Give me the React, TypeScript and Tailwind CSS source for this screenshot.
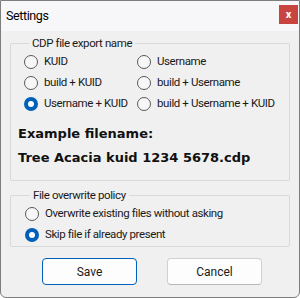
import { useState } from 'react'

function Radio({ checked, label, onClick }: { checked: boolean; label: string; onClick: () => void }) {
  return (
    <button type="button" onClick={onClick} className="flex h-[21px] items-center gap-[6px] text-left whitespace-nowrap">
      {checked ? (
        <span className="flex h-[14px] w-[14px] shrink-0 items-center justify-center rounded-full bg-[#005fb8]">
          <span className="h-[6px] w-[6px] rounded-full bg-white" />
        </span>
      ) : (
        <span className="h-[14px] w-[14px] shrink-0 rounded-full border border-[#5a5a5a] bg-[#f7f7f7]" />
      )}
      <span>{label}</span>
    </button>
  )
}

const nameOptions = [
  'KUID',
  'Username',
  'build + KUID',
  'build + Username',
  'Username + KUID',
  'build + Username + KUID',
]

export default function App() {
  const [naming, setNaming] = useState(4)
  const [policy, setPolicy] = useState(1)

  return (
    <div className="h-[298px] w-[300px] overflow-hidden rounded-b-[6px] border border-[#7d7d7d] bg-[#f0f0f0] font-['Roboto',sans-serif] text-[11.5px] tracking-[-0.4px] text-[#1a1a1a]">
      {/* title bar */}
      <div className="flex h-[30px] items-center justify-between bg-[#f7f7f9] pl-[5px] pr-[1px]">
        <span className="text-[12.5px] tracking-[-0.4px] text-black">Settings</span>
        <button className="mb-[4px] flex h-[19px] w-[19px] items-center justify-center bg-[#c8453f] text-[11px] font-bold leading-none tracking-normal text-white">
          x
        </button>
      </div>

      <div className="px-[9px] pt-[4px]">
        <fieldset className="h-[146px] rounded-[2px] border border-[#d9d9d9] pl-[13px]">
          <legend className="ml-[5px] px-[3px] leading-[16px]">CDP file export name</legend>
          <div className="grid grid-cols-[113px_1fr]">
            {nameOptions.map((o, i) => (
              <Radio key={o} label={o} checked={naming === i} onClick={() => setNaming(i)} />
            ))}
          </div>
          <div className="ml-[-6px] mt-[8px] font-['DejaVu_Sans',sans-serif] text-[13px] font-bold leading-[24px] tracking-normal text-[#111]">
            <div>Example filename:</div>
            <div>Tree Acacia kuid 1234 5678.cdp</div>
          </div>
        </fieldset>

        <fieldset className="mt-[6px] h-[60px] rounded-[2px] border border-[#d9d9d9] pl-[14px]">
          <legend className="ml-[5px] px-[3px] leading-[16px]">File overwrite policy</legend>
          <Radio label="Overwrite existing files without asking" checked={policy === 0} onClick={() => setPolicy(0)} />
          <Radio label="Skip file if already present" checked={policy === 1} onClick={() => setPolicy(1)} />
        </fieldset>

        <div className="mt-[11px] flex gap-[30px] pl-[32px]">
          <button className="h-[27px] w-[95px] rounded-[4px] border border-[#005fb8] bg-[#fdfdfd] text-[12px] tracking-normal">Save</button>
          <button className="h-[27px] w-[95px] rounded-[4px] border border-[#d0d0d0] border-b-[#b8b8b8] bg-[#fdfdfd] text-[12px] tracking-normal">Cancel</button>
        </div>
      </div>
    </div>
  )
}
